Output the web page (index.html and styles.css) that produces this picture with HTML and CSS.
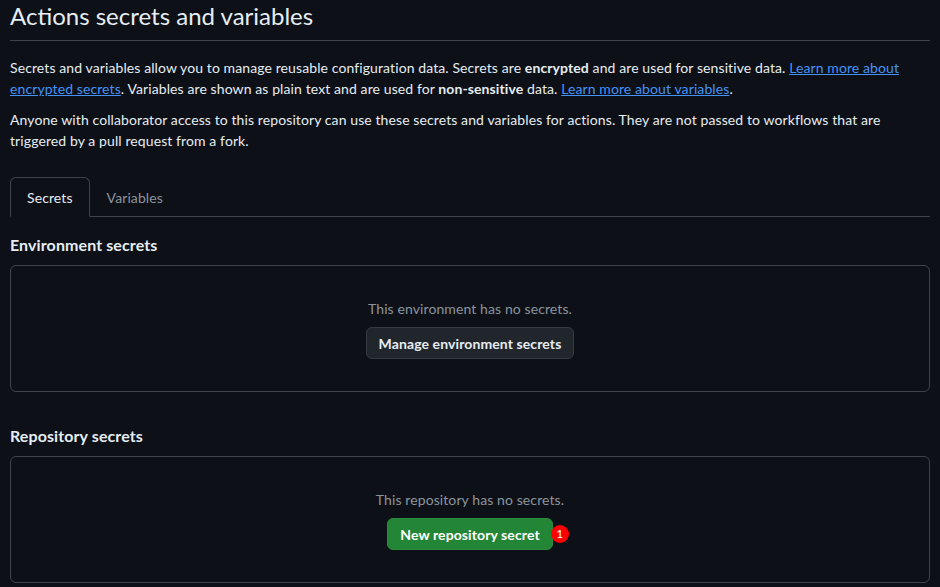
FILE: index.html
```html
<!DOCTYPE html>
<html lang="en">
<head>
    <meta charset="UTF-8">
    <meta name="viewport" content="width=device-width, initial-scale=1.0">
    <title>Actions secrets and variables</title>
    <link rel="stylesheet" href="styles.css">
</head>
<body>
    <div class="page">
        <div class="subhead">
            <h1>Actions secrets and variables</h1>
        </div>

        <p>
            Secrets and variables allow you to manage reusable configuration data. Secrets are <strong>encrypted</strong> and are used for sensitive data. <a href="#">Learn more about encrypted secrets</a>. Variables are shown as plain text and are used for <strong>non-sensitive</strong> data. <a href="#">Learn more about variables</a>.
        </p>
        <p>
            Anyone with collaborator access to this repository can use these secrets and variables for actions. They are not passed to workflows that are triggered by a pull request from a fork.
        </p>

        <nav class="tabnav">
            <a href="#" class="tab selected">Secrets</a>
            <a href="#" class="tab">Variables</a>
        </nav>

        <h2>Environment secrets</h2>
        <div class="blankslate">
            <p class="blank-text">This environment has no secrets.</p>
            <button class="btn">Manage environment secrets</button>
        </div>

        <h2 class="spaced">Repository secrets</h2>
        <div class="blankslate">
            <p class="blank-text">This repository has no secrets.</p>
            <span class="btn-wrap">
                <button class="btn btn-primary">New repository secret</button>
                <span class="badge">1</span>
            </span>
        </div>
    </div>
</body>
</html>
```

FILE: styles.css
```css
body {
    margin: 0;
    background-color: #0d1117;
    color: #e6edf3;
    font-family: Lato, "Segoe UI", sans-serif;
    font-size: 14px;
    line-height: 21px;
    letter-spacing: 0.1px;
}

.page {
    padding: 0 10px;
}

.subhead {
    border-bottom: 1px solid #3d444d;
    padding-bottom: 8px;
}

.subhead h1 {
    margin: 0;
    font-size: 24px;
    line-height: 32px;
    font-weight: 400;
    letter-spacing: 0;
}

p {
    margin: 0 0 10px;
}

.subhead + p {
    margin-top: 16px;
}

strong {
    font-weight: 700;
}

a {
    color: #4493f8;
}

.tabnav {
    display: flex;
    margin-top: 26px;
    border-bottom: 1px solid #3d444d;
}

.tab {
    padding: 9px 16px 7px;
    line-height: 22px;
    color: #8b949e;
    text-decoration: none;
    border: 1px solid transparent;
    border-radius: 6px 6px 0 0;
    margin-bottom: -1px;
}

.tab.selected {
    color: #e6edf3;
    border-color: #3d444d;
    border-bottom-color: #0d1117;
    background-color: #0d1117;
}

h2 {
    margin: 16px 0 8px;
    font-size: 16px;
    line-height: 24px;
    font-weight: 700;
}

h2.spaced {
    margin-top: 32px;
}

.blankslate {
    border: 1px solid #3d444d;
    border-radius: 6px;
    padding: 32px;
    text-align: center;
}

.blank-text {
    margin: 0 0 8px;
    color: #8b949e;
}

.btn {
    height: 32px;
    padding: 0 12px;
    font-family: inherit;
    font-size: 14px;
    font-weight: 700;
    letter-spacing: inherit;
    color: #e6edf3;
    background-color: #21262d;
    border: 1px solid #363b42;
    border-radius: 6px;
    cursor: pointer;
}

.btn-primary {
    color: #ffffff;
    background-color: #238636;
    border-color: #2b8a3e;
}

.btn-wrap {
    position: relative;
    display: inline-block;
}

.badge {
    position: absolute;
    right: -16px;
    top: 50%;
    transform: translateY(-50%);
    width: 18px;
    height: 18px;
    border-radius: 50%;
    background-color: #ff0000;
    color: #ffffff;
    font-size: 12px;
    line-height: 18px;
    text-align: center;
}
```
